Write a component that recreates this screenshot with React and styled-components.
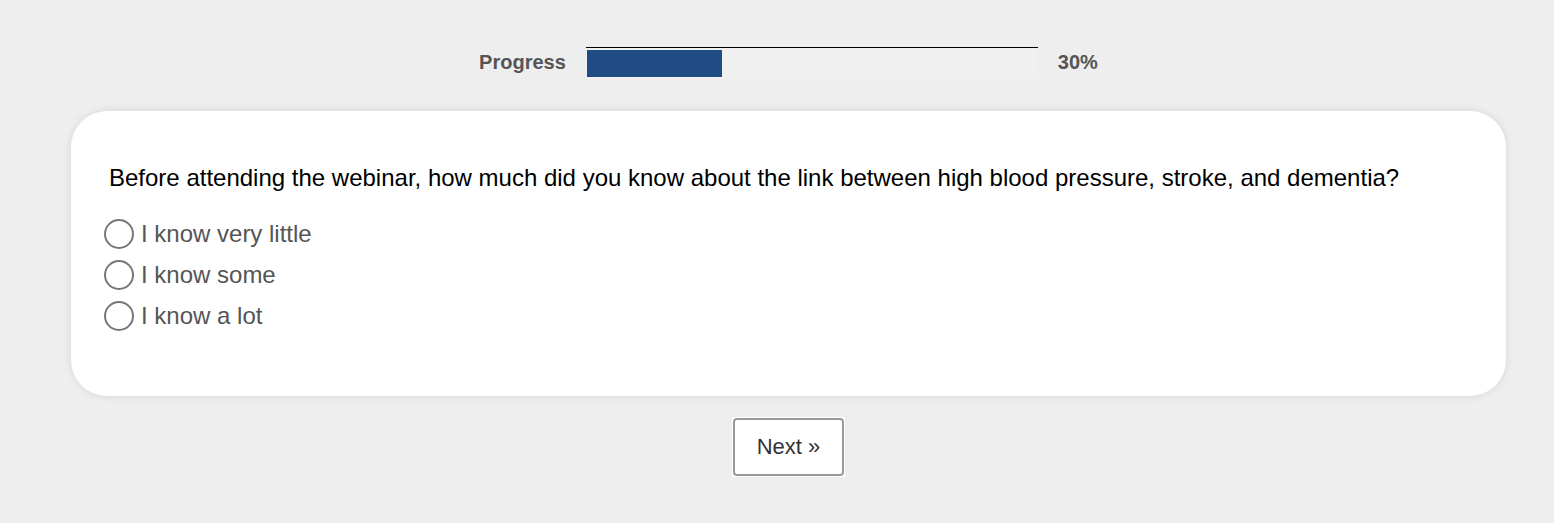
import React from "react";
import styled, { createGlobalStyle } from "styled-components";

const GlobalStyle = createGlobalStyle`
  html, body {
    margin: 0;
    padding: 0;
    background: #eeeeee;
    font-family: "Liberation Sans", Arial, sans-serif;
  }
`;

const Page = styled.div`
  display: flex;
  flex-direction: column;
  align-items: center;
  padding: 46px 48px 40px 71px;
`;

const ProgressRow = styled.div`
  display: flex;
  align-items: center;
  gap: 20px;
  height: 32px;
`;

const ProgressLabel = styled.span`
  font-size: 20px;
  font-weight: 700;
  color: #555555;
  padding-top: 1px;
`;

const Track = styled.div`
  width: 452px;
  height: 31px;
  border-top: 1px solid #000000;
  background: #f0f0f0;
  padding: 2px 0 0 1px;
  box-sizing: border-box;
`;

const Fill = styled.div`
  height: 27px;
  background: #1f4c82;
`;

const Card = styled.div`
  align-self: stretch;
  margin-top: 33px;
  background: #ffffff;
  border-radius: 36px;
  box-shadow: 0 0 8px rgba(0, 0, 0, 0.1);
  padding: 53px 38px 60px 33px;
  height: 285px;
  box-sizing: border-box;
`;

const Question = styled.div`
  font-size: 24px;
  line-height: 28px;
  color: #000000;
  padding-left: 5px;
  margin-bottom: 27px;
`;

const Options = styled.div`
  display: flex;
  flex-direction: column;
  gap: 11px;
`;

const Option = styled.label`
  display: flex;
  align-items: center;
  gap: 7px;
  height: 30px;
  font-size: 24px;
  color: #555555;
  cursor: pointer;
`;

const Radio = styled.span`
  width: 30px;
  height: 30px;
  border: 2.5px solid #777777;
  border-radius: 50%;
  box-sizing: border-box;
  flex-shrink: 0;
`;

const ButtonFrame = styled.div`
  margin-top: 21px;
  background: #ffffff;
  padding: 1px;
`;

const NextButton = styled.button`
  display: block;
  width: 111px;
  height: 58px;
  background: #ffffff;
  border: 2px solid #999999;
  border-radius: 4px;
  font-family: "Liberation Sans", Arial, sans-serif;
  font-size: 22px;
  color: #333333;
  cursor: pointer;
`;

const options = ["I know very little", "I know some", "I know a lot"];

const App = () => {
  const percent = 30;
  return (
    <>
      <GlobalStyle />
      <Page>
        <ProgressRow>
          <ProgressLabel>Progress</ProgressLabel>
          <Track>
            <Fill style={{ width: `${percent}%` }} />
          </Track>
          <ProgressLabel>{percent}%</ProgressLabel>
        </ProgressRow>
        <Card>
          <Question>
            Before attending the webinar, how much did you know about the link
            between high blood pressure, stroke, and dementia?
          </Question>
          <Options>
            {options.map((text) => (
              <Option key={text}>
                <Radio />
                {text}
              </Option>
            ))}
          </Options>
        </Card>
        <ButtonFrame>
          <NextButton>Next »</NextButton>
        </ButtonFrame>
      </Page>
    </>
  );
};

export default App;
